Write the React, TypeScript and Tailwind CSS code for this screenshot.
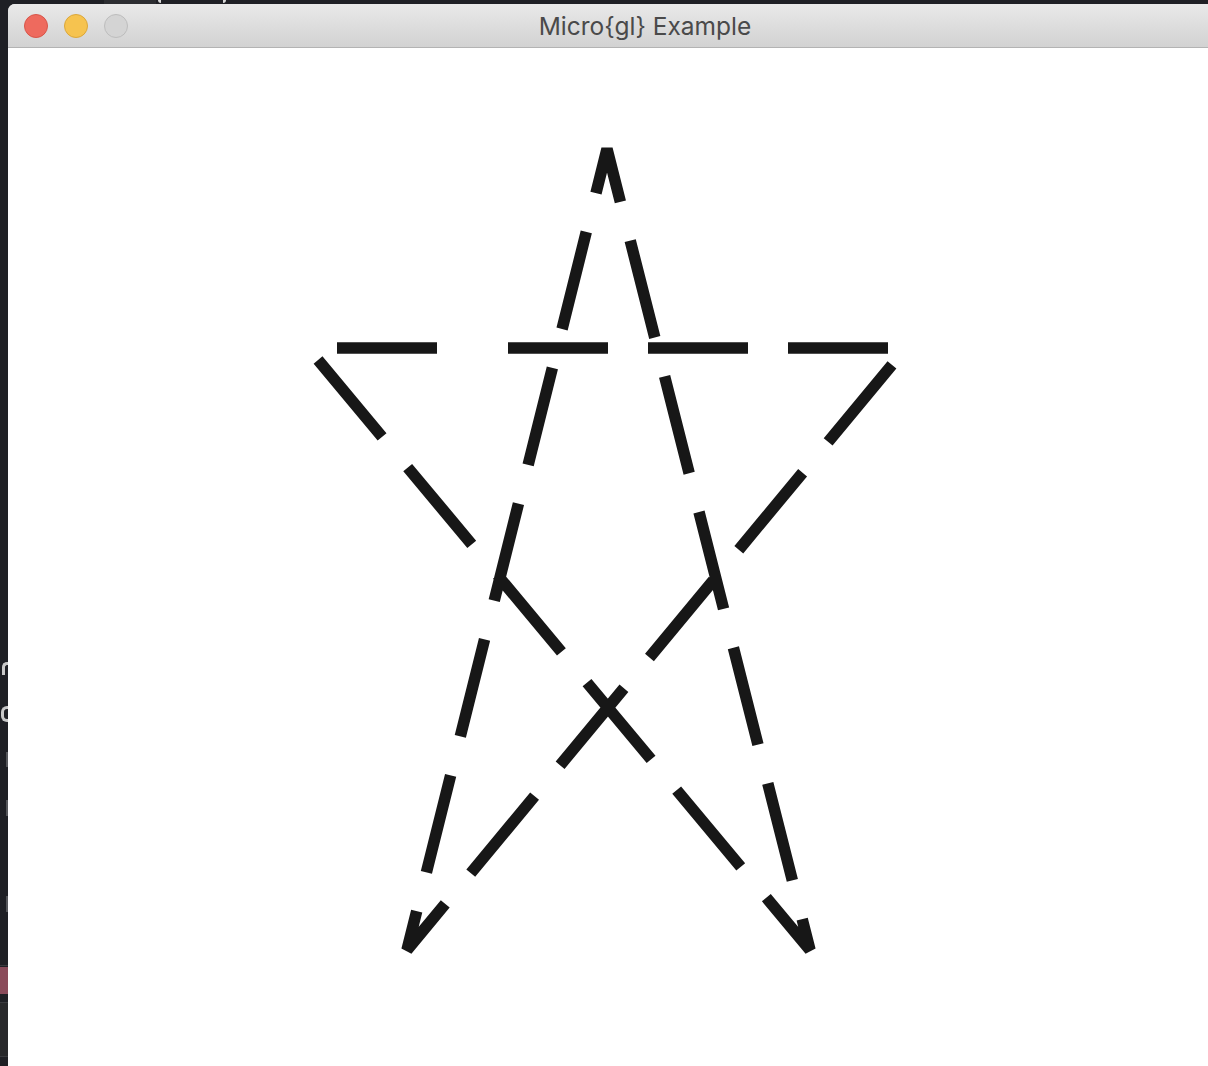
import React from "react";

// star outline, in page coordinates; starts on the top bar and runs round once
const STAR = "M508 348 L906 348 L407 950 L607 149 L810 950 L308 348";

const Light = ({ fill, ring }: { fill: string; ring: string }) => (
  <span className={`block w-[24px] h-[24px] rounded-full border ${fill} ${ring}`} />
);

export default function App() {
  return (
    <div className="relative w-[1208px] h-[1066px] overflow-hidden bg-[#1f2025] flex pt-[4px] pl-[8px]">
      {/* bits of the desktop behind the window */}
      <div className="absolute left-[104px] top-0 w-[52px] h-[4px] bg-[#2c2d31]" />
      <div className="absolute left-[158px] top-0 w-[3px] h-[3px] rounded-bl-full bg-[#d8d8d8]" />
      <div className="absolute left-[223px] top-0 w-[3px] h-[3px] rounded-br-full bg-[#d8d8d8]" />
      <div className="absolute left-[2px] top-[662px] w-[6px] h-[13px] rounded-tl-[5px] border-l-[3px] border-t-[3px] border-[#c9c9c9]" />
      <div className="absolute left-[1px] top-[706px] w-[7px] h-[16px] rounded-l-[6px] border-[3px] border-r-0 border-[#c9c9c9]" />
      <div className="absolute left-[6px] top-[752px] w-[2px] h-[15px] bg-[#55565a]" />
      <div className="absolute left-[6px] top-[800px] w-[2px] h-[16px] bg-[#55565a]" />
      <div className="absolute left-[6px] top-[896px] w-[2px] h-[16px] bg-[#55565a]" />
      <div className="absolute left-0 top-[965px] w-[8px] h-[1px] bg-[#3a3b3f]" />
      <div className="absolute left-0 top-[967px] w-[8px] h-[27px] bg-[#8a4b5a]" />
      <div className="absolute left-0 top-[1002px] w-[8px] h-[1px] bg-[#3a3b3f]" />
      <div className="absolute left-0 top-[1003px] w-[8px] h-[53px] bg-[#28292b]" />
      <div className="absolute left-0 top-[1056px] w-[8px] h-[1px] bg-[#3a3b3f]" />

      <div className="relative w-[1274px] shrink-0 flex flex-col bg-white rounded-tl-[7px] overflow-hidden">
        <div className="relative h-[44px] shrink-0 flex items-center pl-[16px] gap-[16px] bg-gradient-to-b from-[#e9e9e9] to-[#d2d2d2] border-b border-[#b3b3b3]">
          <Light fill="bg-[#ee6a5e]" ring="border-[#d85549]" />
          <Light fill="bg-[#f6c34f]" ring="border-[#dba73a]" />
          <Light fill="bg-[#d4d4d4]" ring="border-[#bdbdbd]" />
          <div className="absolute inset-0 flex items-center justify-center pt-[2px] pointer-events-none">
            <span className="font-['Inter',sans-serif] text-[24.5px] leading-none text-[#4a4a4a]">
              Micro{"{gl}"} Example
            </span>
          </div>
        </div>

        <div className="flex-1">
          <svg width="1274" height="1018" viewBox="8 48 1274 1018" className="block">
            <g fill="none" stroke="#171717" strokeWidth="11.5" strokeLinecap="butt" strokeLinejoin="bevel">
              <path d={STAR} strokeDasharray="100 40" />
              <path d="M337 348 L437 348" />
            </g>
          </svg>
        </div>
      </div>
    </div>
  );
}
